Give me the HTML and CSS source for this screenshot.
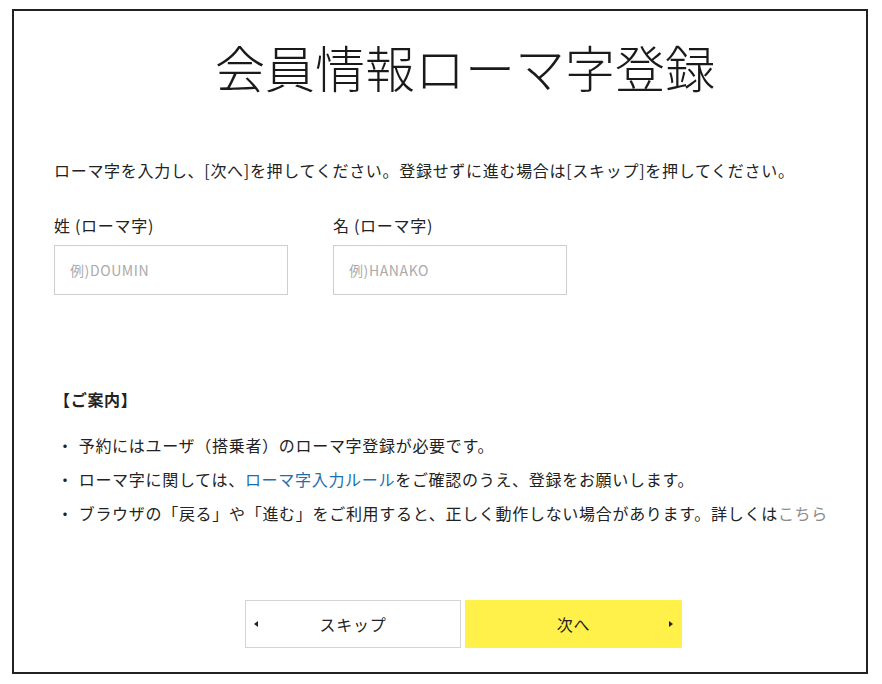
FILE: index.html
```html
<!DOCTYPE html>
<html lang="ja">
<head>
<meta charset="utf-8">
<title>会員情報ローマ字登録</title>
<link rel="stylesheet" href="styles.css">
</head>
<body>
<div class="frame">
  <h1 class="title">会員情報ローマ字登録</h1>
  <p class="lead">ローマ字を入力し、[次へ]を押してください。登録せずに進む場合は[スキップ]を押してください。</p>
  <div class="fields">
    <div class="field">
      <label class="label" for="sei">姓 (ローマ字)</label>
      <input class="input" id="sei" type="text" placeholder="例)DOUMIN">
    </div>
    <div class="field">
      <label class="label" for="mei">名 (ローマ字)</label>
      <input class="input" id="mei" type="text" placeholder="例)HANAKO">
    </div>
  </div>
  <div class="notice">
    <p class="notice-head">【ご案内】</p>
    <ul class="notice-list">
      <li>予約にはユーザ（搭乗者）のローマ字登録が必要です。</li>
      <li>ローマ字に関しては、<a class="link" href="#">ローマ字入力ルール</a>をご確認のうえ、登録をお願いします。</li>
      <li>ブラウザの「戻る」や「進む」をご利用すると、正しく動作しない場合があります。詳しくは<a class="link link-gray" href="#">こちら</a></li>
    </ul>
  </div>
  <div class="actions">
    <button class="btn btn-skip" type="button"><span class="arrow arrow-left"></span>スキップ</button>
    <button class="btn btn-next" type="button">次へ<span class="arrow arrow-right"></span></button>
  </div>
</div>
</body>
</html>
```

FILE: styles.css
```css
html, body {
  margin: 0;
  padding: 0;
  background: #ffffff;
}

body {
  font-family: "Noto Sans CJK JP", "Noto Sans", sans-serif;
  color: #222222;
  letter-spacing: 0.7px;
}

.frame {
  box-sizing: border-box;
  width: 856px;
  height: 665px;
  margin: 9px 0 0 12px;
  border: 2px solid #222222;
  padding: 30px 0 0 40px;
}

.title {
  margin: 0 0 0 -40px;
  padding-left: 50px;
  font-size: 50px;
  line-height: 50px;
  font-weight: 300;
  letter-spacing: 0;
  text-align: center;
  color: #1a1a1a;
}

.lead {
  margin: 67px 0 0 0;
  font-size: 16px;
  line-height: 24px;
  white-space: nowrap;
}

.fields {
  display: flex;
  gap: 45px;
  margin-top: 31px;
}

.field {
  display: flex;
  flex-direction: column;
  gap: 8px;
}

.label {
  font-size: 16px;
  line-height: 24px;
}

.input {
  box-sizing: border-box;
  width: 234px;
  height: 50px;
  margin: 0;
  border: 1px solid #cfcfcf;
  border-radius: 0;
  padding: 0 15px;
  font-family: "Noto Sans CJK JP", "Noto Sans", sans-serif;
  font-size: 14px;
  letter-spacing: 0.6px;
  color: #222222;
  background: #ffffff;
  outline: none;
}

.input::placeholder {
  color: #aaaaaa;
}

.notice {
  margin-top: 92px;
}

.notice-head {
  margin: 0;
  font-size: 16px;
  line-height: 24px;
  font-weight: 700;
}

.notice-list {
  list-style: none;
  margin: 17px 0 0 0;
  padding: 0;
}

.notice-list li {
  display: flex;
  font-size: 16px;
  line-height: 34px;
  white-space: nowrap;
}

.notice-list li::before {
  content: "・";
  margin: 0 5px 0 3px;
}

.link {
  color: #1e6fae;
  text-decoration: none;
}

.link-gray {
  color: #8c8c8c;
}

.actions {
  display: flex;
  justify-content: center;
  gap: 4px;
  margin: 70px 0 0 -40px;
  padding-left: 47px;
}

.btn {
  position: relative;
  box-sizing: border-box;
  width: 216px;
  height: 48px;
  margin: 0;
  padding: 0;
  border: 1px solid #d4d4d4;
  border-radius: 0;
  font-family: "Noto Sans CJK JP", "Noto Sans", sans-serif;
  font-size: 16px;
  letter-spacing: 0.7px;
  color: #222222;
  background: #ffffff;
  cursor: pointer;
}

.btn-next {
  width: 217px;
  border-color: #fff14a;
  background: #fff14a;
}

.arrow {
  position: absolute;
  top: 50%;
  width: 0;
  height: 0;
  margin-top: -3px;
  border-top: 3px solid transparent;
  border-bottom: 3px solid transparent;
}

.arrow-left {
  left: 8px;
  border-right: 4px solid #222222;
}

.arrow-right {
  right: 8px;
  border-left: 4px solid #222222;
}
```
